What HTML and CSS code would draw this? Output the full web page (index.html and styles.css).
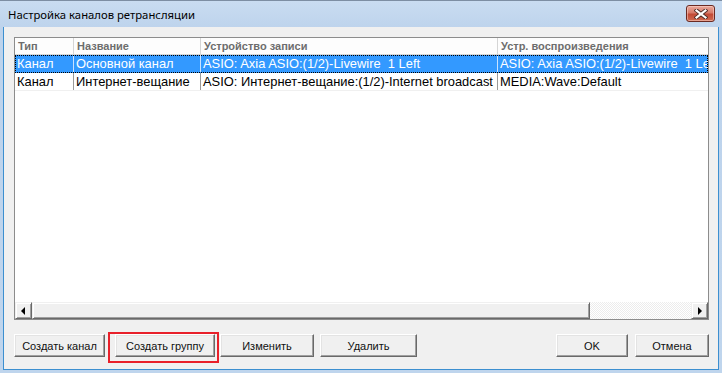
FILE: index.html
```html
<!DOCTYPE html>
<html>
<head>
<meta charset="utf-8">
<link rel="stylesheet" href="styles.css">
</head>
<body>
<div class="window">
  <div class="titlebar">
    <span class="title">Настройка каналов ретрансляции</span>
    <div class="close">
      <svg width="14" height="10" viewBox="0 0 14 10">
        <path d="M2.5 1.5 L11.5 8.5 M11.5 1.5 L2.5 8.5" stroke="#4a2a25" stroke-width="4" stroke-linecap="square"/>
        <path d="M2.5 1.5 L11.5 8.5 M11.5 1.5 L2.5 8.5" stroke="#ffffff" stroke-width="2.2" stroke-linecap="square"/>
      </svg>
    </div>
  </div>
  <div class="client">
    <div class="listview">
      <div class="lv-body">
        <div class="lv-header">
          <div class="hcell c1">Тип</div>
          <div class="hcell c2">Название</div>
          <div class="hcell c3">Устройство записи</div>
          <div class="hcell c4">Устр. воспроизведения</div>
        </div>
        <div class="lv-row selected">
          <div class="cell c1">Канал</div>
          <div class="cell c2">Основной канал</div>
          <div class="cell c3">ASIO: Axia ASIO:(1/2)-Livewire  1 Left</div>
          <div class="cell c4">ASIO: Axia ASIO:(1/2)-Livewire  1 Left</div>
        </div>
        <div class="lv-row">
          <div class="cell c1">Канал</div>
          <div class="cell c2">Интернет-вещание</div>
          <div class="cell c3">ASIO: Интернет-вещание:(1/2)-Internet broadcast</div>
          <div class="cell c4">MEDIA:Wave:Default</div>
        </div>
      </div>
      <div class="hscroll">
        <div class="sbtn"><span class="arrow-left"></span></div>
        <div class="track"><div class="thumb"></div></div>
        <div class="sbtn"><span class="arrow-right"></span></div>
      </div>
    </div>
    <div class="buttons">
      <button class="btn w-create">Создать канал</button>
      <button class="btn w-group marked">Создать группу</button>
      <button class="btn w-edit">Изменить</button>
      <button class="btn w-del">Удалить</button>
      <div class="spacer"></div>
      <button class="btn w-ok">OK</button>
      <button class="btn w-cancel">Отмена</button>
    </div>
  </div>
</div>
</body>
</html>
```
FILE: styles.css
```css
html, body {
  margin: 0;
  padding: 0;
}
body {
  width: 722px;
  height: 373px;
  overflow: hidden;
  font-family: "Liberation Sans", Arial, sans-serif;
  background: #b9d1ea;
}
.window {
  width: 722px;
  height: 373px;
  box-sizing: border-box;
  display: flex;
  flex-direction: column;
  background: linear-gradient(#c9dcf1, #bdd3ec 28px, #bfd5ed);
  border-top: 1px solid #7d8ea3;
  padding: 0 3px 3px 3px;
}
.titlebar {
  height: 26px;
  flex: none;
  display: flex;
  align-items: center;
  position: relative;
}
.title {
  font-family: "Noto Sans", "Open Sans", sans-serif;
  font-size: 11.3px;
  color: #000;
  margin-left: 5px;
  margin-top: 1px;
}
.close {
  position: absolute;
  left: 683px;
  top: 4px;
  width: 27px;
  height: 15px;
  border: 1px solid #6b2a22;
  border-radius: 3px;
  background: linear-gradient(#e9a99c, #d77b6a 45%, #c24a36 55%, #cf6b52);
  display: flex;
  align-items: center;
  justify-content: center;
  box-shadow: inset 0 0 0 1px rgba(255, 220, 210, 0.5);
}
.client {
  flex: 1;
  background: #f0f0f0;
  border-left: 1px solid #3c8fd0;
  border-right: 1px solid #3c8fd0;
  border-bottom: 1px solid #3c8fd0;
  display: flex;
  flex-direction: column;
  padding: 10px 9px 0 10px;
}
.listview {
  height: 283px;
  box-sizing: border-box;
  border: 1px solid #8c8c8c;
  background: #fff;
  display: flex;
  flex-direction: column;
}
.lv-body {
  flex: 1;
  overflow: hidden;
}
.lv-header {
  display: flex;
  height: 16px;
  border-bottom: 1px solid #d5d5d5;
  background: #fdfdfd;
}
.hcell {
  font-weight: bold;
  font-size: 11px;
  color: #6d6d6d;
  line-height: 16px;
  padding-left: 3px;
  box-sizing: border-box;
  border-right: 1px solid #d5d5d5;
  white-space: pre;
  overflow: hidden;
  flex: none;
}
.c1 { width: 59px; }
.c2 { width: 127px; }
.c3 { width: 297px; }
.c4 { width: 260px; border-right: none; }
.lv-row {
  display: flex;
  height: 18px;
  box-sizing: border-box;
  border-bottom: 1px solid #f0f0f0;
}
.cell {
  font-size: 12.9px;
  line-height: 17px;
  color: #000;
  padding-left: 2px;
  box-sizing: border-box;
  border-right: 1px solid #9a9a9a;
  white-space: pre;
  overflow: hidden;
  flex: none;
}
.cell.c4 { border-right: none; }
.lv-row.selected {
  background: #3399ff;
  outline: 1px dotted #000;
  outline-offset: -1px;
  border-bottom: 1px dotted #000;
}
.lv-row.selected .cell {
  color: #fff;
  border-right-color: #c9e2ff;
}
.hscroll {
  height: 17px;
  display: flex;
  flex: none;
}
.sbtn {
  width: 17px;
  height: 17px;
  box-sizing: border-box;
  background: #f0f0f0;
  border-top: 1px solid #f0f0f0;
  border-left: 1px solid #f0f0f0;
  border-right: 1px solid #696969;
  border-bottom: 1px solid #696969;
  box-shadow: inset 1px 1px 0 #fff, inset -1px -1px 0 #a0a0a0;
  display: flex;
  align-items: center;
  justify-content: center;
  flex: none;
}
.arrow-left {
  width: 0;
  height: 0;
  border-top: 4px solid transparent;
  border-bottom: 4px solid transparent;
  border-right: 4px solid #000;
  margin-right: 1px;
}
.arrow-right {
  width: 0;
  height: 0;
  border-top: 4px solid transparent;
  border-bottom: 4px solid transparent;
  border-left: 4px solid #000;
  margin-left: 1px;
}
.track {
  flex: 1;
  display: flex;
  background-color: #f4f4f4;
  background-image: repeating-conic-gradient(#ffffff 0 25%, #ececec 0 50%);
  background-size: 2px 2px;
}
.thumb {
  width: 558px;
  height: 17px;
  box-sizing: border-box;
  background: #f0f0f0;
  border-top: 1px solid #f0f0f0;
  border-left: 1px solid #f0f0f0;
  border-right: 1px solid #696969;
  border-bottom: 1px solid #696969;
  box-shadow: inset 1px 1px 0 #fff, inset -1px -1px 0 #a0a0a0;
}
.buttons {
  display: flex;
  margin-top: 14px;
  height: 23px;
}
.btn {
  height: 23px;
  box-sizing: border-box;
  font-family: "Liberation Sans", Arial, sans-serif;
  font-size: 11px;
  color: #111;
  background: #f0f0f0;
  border-top: 1px solid #fff;
  border-left: 1px solid #fff;
  border-right: 1px solid #696969;
  border-bottom: 1px solid #696969;
  box-shadow: inset -1px -1px 0 #a0a0a0, inset 1px 1px 0 #e3e3e3;
  padding: 0;
  margin: 0;
  flex: none;
}
.w-create { width: 91px; }
.w-group { width: 100px; margin-left: 10px; }
.w-edit { width: 94px; margin-left: 5px; }
.w-del { width: 97px; margin-left: 6px; }
.w-ok { width: 72px; }
.w-cancel { width: 74px; margin-left: 7px; }
.spacer { flex: 1; }
.marked {
  position: relative;
  overflow: visible;
}
.marked::after {
  content: "";
  position: absolute;
  left: -8px;
  top: -3px;
  right: -5px;
  bottom: -7px;
  border: 2px solid #e8202a;
}
```
